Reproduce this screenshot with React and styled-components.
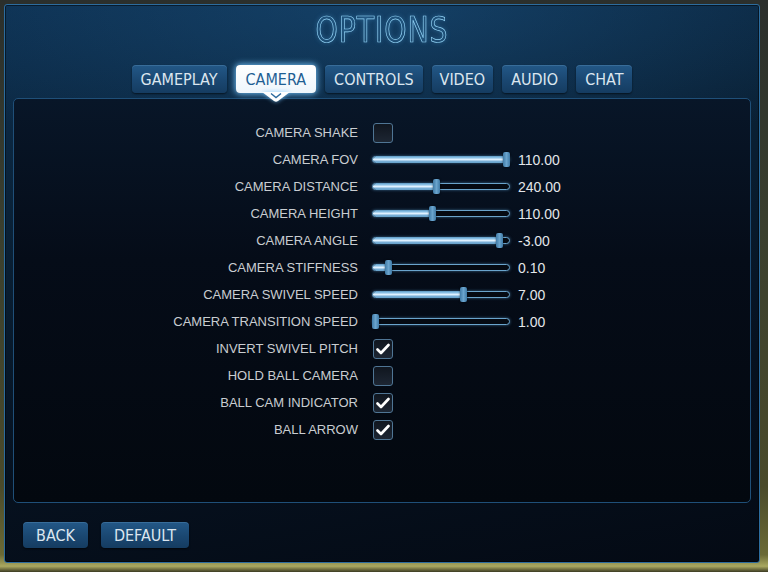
import React from "react";
import styled, { createGlobalStyle } from "styled-components";

const Global = createGlobalStyle`
  html, body { margin: 0; padding: 0; }
  body {
    width: 768px;
    height: 572px;
    overflow: hidden;
    background:
      linear-gradient(180deg, #2b2f2c 0%, #3a3f2e 40%, #4a4a2a 85%, #6b6a35 97%, #a9a860 99%, #3b3a22 100%);
    font-family: "Liberation Sans", Arial, sans-serif;
  }
`;

const Screen = styled.div`
  width: 768px;
  height: 572px;
  padding: 4px 8px 9px 4px;
  box-sizing: border-box;
  display: flex;
`;

const Window = styled.div`
  flex: 1;
  display: flex;
  flex-direction: column;
  border: 1px solid #2c6c9e;
  border-radius: 3px;
  padding: 0 8px;
  background:
    radial-gradient(ellipse 70% 30% at 50% 0%, rgba(30, 90, 140, 0.45), rgba(0, 0, 0, 0) 100%),
    linear-gradient(170deg, #0d2f4f 0%, #0a2238 30%, #06111f 70%, #040a14 100%);
  box-shadow: inset 0 0 0 1px rgba(0, 0, 0, 0.5);
`;

const Title = styled.h1`
  margin: 4px 0 0;
  height: 42px;
  text-align: center;
  font-family: "DejaVu Sans Condensed", "DejaVu Sans", sans-serif;
  font-weight: 200;
  font-size: 35px;
  line-height: 42px;
  letter-spacing: 1px;
  color: transparent;
  -webkit-text-stroke: 0.7px #93d4f7;
  text-shadow: 0 0 6px rgba(90, 180, 240, 0.4);
  transform: scaleX(0.9);
`;

const TabBar = styled.nav`
  display: flex;
  justify-content: center;
  gap: 9px;
  margin-top: 14px;
  height: 29px;
`;

const Tab = styled.div`
  position: relative;
  height: 28px;
  padding: 0 ${(p) => p.$pad}px;
  display: flex;
  align-items: center;
  border-radius: 4px;
  font-family: "DejaVu Sans Condensed", "DejaVu Sans", sans-serif;
  font-size: 16px;
  color: ${(p) => (p.$active ? "#1f5f93" : "#dbe6ef")};
  background: ${(p) =>
    p.$active
      ? "linear-gradient(180deg, #ffffff 0%, #eef6fc 100%)"
      : "linear-gradient(180deg, #235887 0%, #1a4771 55%, #153c61 100%)"};
  box-shadow: ${(p) =>
    p.$active
      ? "0 0 6px 1px rgba(120, 200, 255, 0.9)"
      : "inset 0 1px 0 rgba(120, 170, 210, 0.25), 0 1px 2px rgba(0,0,0,0.6)"};
`;

const Pointer = styled.svg`
  position: absolute;
  left: 50%;
  top: 27px;
  transform: translateX(-50%);
  filter: drop-shadow(0 0 2px rgba(120, 200, 255, 0.8));
`;

const Panel = styled.section`
  margin-top: 4px;
  height: 405px;
  flex-shrink: 0;
  border: 1px solid #1f4f78;
  border-radius: 5px;
  background: linear-gradient(180deg, #081628 0%, #050c18 40%, #03080f 100%);
  padding-top: 20px;
  box-sizing: border-box;
`;

const Rows = styled.div`
  display: grid;
  grid-template-columns: 344px 1fr;
  column-gap: 14px;
  grid-auto-rows: 27px;
  align-items: center;
`;

const Label = styled.div`
  text-align: right;
  font-size: 13px;
  color: #c9cdd1;
  white-space: nowrap;
`;

const Control = styled.div`
  display: flex;
  align-items: center;
  gap: 8px;
`;

const Box = styled.div`
  width: 18px;
  height: 18px;
  margin-left: 1px;
  border: 1.5px solid #4f7594;
  border-radius: 3px;
  background: linear-gradient(180deg, #10161f 0%, #1d2633 100%);
  display: flex;
  align-items: center;
  justify-content: center;
`;

const Track = styled.div`
  position: relative;
  width: 138px;
  height: 7px;
  box-sizing: border-box;
  border: 1px solid #6aa4cc;
  border-radius: 4px;
  background: #050a12;
  box-shadow: 0 0 3px rgba(100, 170, 220, 0.55);
`;

const Fill = styled.div`
  position: absolute;
  left: 0;
  top: 0;
  bottom: 0;
  border-radius: 3px;
  background: linear-gradient(180deg, #6fb0dc 0%, #dff1ff 50%, #5c9ccb 100%);
`;

const Thumb = styled.div`
  position: absolute;
  top: -5px;
  width: 7px;
  height: 15px;
  margin-left: -1px;
  border-radius: 2px;
  background: linear-gradient(90deg, #3f7aa6 0%, #6aa4cd 50%, #3f7aa6 100%);
  box-shadow: 0 0 2px rgba(0, 0, 0, 0.7);
`;

const Value = styled.span`
  font-size: 14px;
  color: #e3e6ea;
`;

const Footer = styled.div`
  display: flex;
  gap: 13px;
  margin-top: 19px;
  padding-left: 10px;
`;

const Button = styled.div`
  height: 26px;
  padding: 0 ${(p) => p.$pad}px;
  display: flex;
  align-items: center;
  border-radius: 4px;
  font-family: "DejaVu Sans Condensed", "DejaVu Sans", sans-serif;
  font-size: 16px;
  color: #dbe6ef;
  background: linear-gradient(180deg, #235887 0%, #1a4771 55%, #153c61 100%);
  box-shadow: inset 0 1px 0 rgba(120, 170, 210, 0.25), 0 1px 2px rgba(0,0,0,0.6);
`;

const tabs = [
  { name: "GAMEPLAY", pad: 9 },
  { name: "CAMERA", pad: 10, active: true },
  { name: "CONTROLS", pad: 9 },
  { name: "VIDEO", pad: 8 },
  { name: "AUDIO", pad: 9 },
  { name: "CHAT", pad: 9 },
];

const settings = [
  { label: "CAMERA SHAKE", type: "check", on: false },
  { label: "CAMERA FOV", type: "slider", pos: 1.0, value: "110.00" },
  { label: "CAMERA DISTANCE", type: "slider", pos: 0.465, value: "240.00" },
  { label: "CAMERA HEIGHT", type: "slider", pos: 0.435, value: "110.00" },
  { label: "CAMERA ANGLE", type: "slider", pos: 0.945, value: "-3.00" },
  { label: "CAMERA STIFFNESS", type: "slider", pos: 0.1, value: "0.10" },
  { label: "CAMERA SWIVEL SPEED", type: "slider", pos: 0.67, value: "7.00" },
  { label: "CAMERA TRANSITION SPEED", type: "slider", pos: 0, value: "1.00" },
  { label: "INVERT SWIVEL PITCH", type: "check", on: true },
  { label: "HOLD BALL CAMERA", type: "check", on: false },
  { label: "BALL CAM INDICATOR", type: "check", on: true },
  { label: "BALL ARROW", type: "check", on: true },
];

function Check({ on }) {
  return (
    <Box>
      {on && (
        <svg width="14" height="12" viewBox="0 0 14 12">
          <path
            d="M1.5 6.5 L5 10 L12.5 2"
            fill="none"
            stroke="#ffffff"
            strokeWidth="2.6"
            strokeLinecap="round"
            strokeLinejoin="round"
          />
        </svg>
      )}
    </Box>
  );
}

function Slider({ pos, value }) {
  // thumb travels across the track width minus its own width
  const offset = `calc(${pos} * (100% - 5px))`;
  return (
    <>
      <Track>
        <Fill style={{ width: `calc(${pos} * (100% - 5px) + 3px)` }} />
        <Thumb style={{ left: offset }} />
      </Track>
      <Value>{value}</Value>
    </>
  );
}

export default function App() {
  return (
    <>
      <Global />
      <Screen>
        <Window>
          <Title>OPTIONS</Title>
          <TabBar>
            {tabs.map((t) => (
              <Tab key={t.name} $active={t.active} $pad={t.pad}>
                {t.name}
                {t.active && (
                  <Pointer width="28" height="10" viewBox="0 0 28 10">
                    <path d="M0 0 H28 L16 9 Q14 10.5 12 9 Z" fill="#ffffff" />
                    <path
                      d="M9 1.5 L14 5.5 L19 1.5"
                      fill="none"
                      stroke="#2a6a9e"
                      strokeWidth="1.4"
                    />
                  </Pointer>
                )}
              </Tab>
            ))}
          </TabBar>
          <Panel>
            <Rows>
              {settings.map((s) => (
                <React.Fragment key={s.label}>
                  <Label>{s.label}</Label>
                  <Control>
                    {s.type === "check" ? (
                      <Check on={s.on} />
                    ) : (
                      <Slider pos={s.pos} value={s.value} />
                    )}
                  </Control>
                </React.Fragment>
              ))}
            </Rows>
          </Panel>
          <Footer>
            <Button $pad={13}>BACK</Button>
            <Button $pad={13}>DEFAULT</Button>
          </Footer>
        </Window>
      </Screen>
    </>
  );
}
